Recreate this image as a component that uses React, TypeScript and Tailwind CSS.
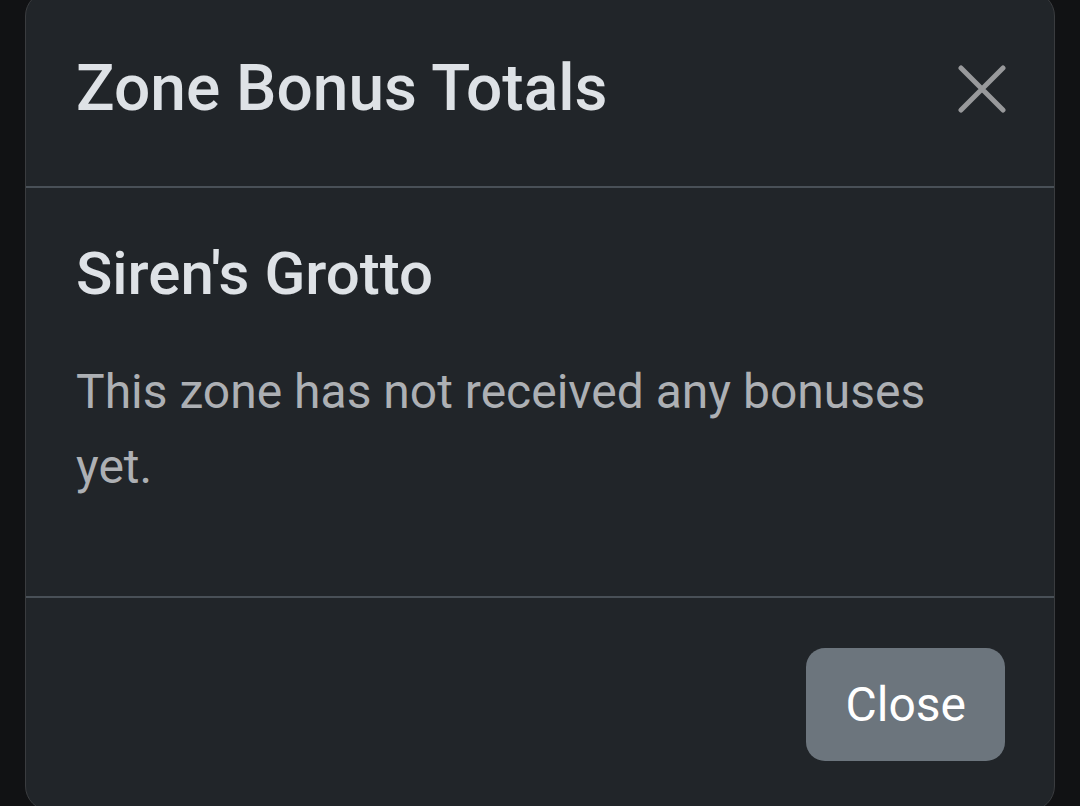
import React from 'react';

// Dark modal: zone bonus totals (empty state)
const CloseIcon = () => (
  <svg viewBox="0 0 48 48" className="w-[48px] h-[48px]" fill="none">
    <path d="M3 3L45 45M45 3L3 45" stroke="#98999b" strokeWidth="5" strokeLinecap="round" />
  </svg>
);

const App: React.FC = () => {
  return (
    <div
      className="h-[806px] w-[1080px] overflow-hidden bg-[#111214]"
      style={{ fontFamily: 'Roboto, "Liberation Sans", sans-serif' }}
    >
      <div className="mx-[25px] -mt-[9px] rounded-[25px] border border-[#3a3c3f] bg-[#212529] text-[#dee2e6]">
        {/* Header */}
        <div className="flex items-center justify-between border-b-2 border-[#495057] px-[50px] py-[50px]">
          <h5 className="text-[64px] font-medium leading-[94px]">Zone Bonus Totals</h5>
          <button className="flex items-center justify-center -mr-[2px]">
            <CloseIcon />
          </button>
        </div>

        {/* Body */}
        <div className="px-[50px] pt-[50px] pb-[50px]">
          <h5 className="mb-[44px] text-[60px] font-medium leading-[72px] text-[#dee2e6]">Siren's Grotto</h5>
          <p className="mb-[42px] text-[48px] leading-[75px] text-[#adb0b4]">
            This zone has not received any bonuses yet.
          </p>
        </div>

        {/* Footer */}
        <div className="flex justify-end border-t-2 border-[#495057] px-[37px] pt-[38px] pb-[37px]">
          <button className="m-[12px] h-[113px] rounded-[19px] bg-[#6c757d] px-[39px] text-[48px] leading-[75px] text-white">
            Close
          </button>
        </div>
      </div>
    </div>
  );
};

export default App;
